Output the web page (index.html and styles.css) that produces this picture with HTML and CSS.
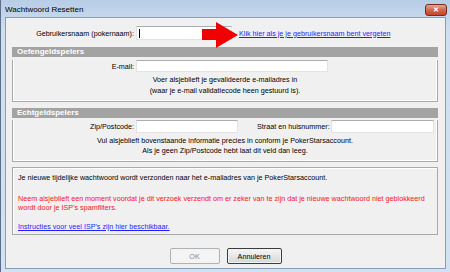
FILE: index.html
```html
<!DOCTYPE html>
<html lang="nl">
<head>
	<meta charset="UTF-8">
	<title>Wachtwoord Resetten</title>
	<link rel="stylesheet" href="styles.css">
</head>
<body>
	<div class="window">
		<div class="titlebar">
			<span class="title">Wachtwoord Resetten</span>
			<span class="close">&#x2715;</span>
		</div>

		<div class="client">
			<!-- gebruikersnaam -->
			<div class="row user-row">
				<label class="lbl lbl-user">Gebruikersnaam (pokernaam):</label>
				<div class="field field-user"><span class="caret"></span></div>
				<a class="link forgot" href="#">Klik hier als je je gebruikersnaam bent vergeten</a>
			</div>

			<!-- oefengeld -->
			<div class="group">
				<div class="group-head">Oefengeldspelers</div>
				<div class="group-body">
					<div class="row mail-row">
						<label class="lbl lbl-sub">E-mail:</label>
						<div class="field field-mail"></div>
					</div>
					<p class="note note-mail">Voer alsjeblieft je gevalideerde e-mailadres in<br>(waar je e-mail validatiecode heen gestuurd is).</p>
				</div>
			</div>

			<!-- echtgeld -->
			<div class="group group2">
				<div class="group-head">Echtgeldspelers</div>
				<div class="group-body">
					<div class="row zip-row">
						<label class="lbl lbl-sub">Zip/Postcode:</label>
						<div class="field field-zip"></div>
						<label class="lbl lbl-street">Straat en huisnummer:</label>
						<div class="field field-street"></div>
					</div>
					<p class="note note-zip">Vul alsjeblieft bovenstaande informatie precies in conform je PokerStarsaccount.<br>Als je geen Zip/Postcode hebt laat dit veld dan leeg.</p>
				</div>
			</div>

			<div class="infobox">
				<p class="info">Je nieuwe tijdelijke wachtwoord wordt verzonden naar het e-mailadres van je PokerStarsaccount.</p>
				<p class="info warn">Neem alsjeblieft een moment voordat je dit verzoek verzendt om er zeker van te zijn dat je nieuwe wachtwoord niet geblokkeerd<br>wordt door je ISP's spamfilters.</p>
				<p class="info"><a class="link" href="#">Instructies voor veel ISP's zijn hier beschikbaar.</a></p>
			</div>

			<div class="buttons">
				<button class="btn btn-ok" disabled>OK</button>
				<button class="btn btn-cancel">Annuleren</button>
			</div>
		</div>

		<!-- rode pijl over het scherm heen -->
		<svg class="arrow" width="36" height="26" viewBox="0 0 36 26">
			<polygon points="0,7 14,7 14,0 36,13 14,26 14,18 0,18" fill="#f00000"/>
		</svg>
	</div>
</body>
</html>
```

FILE: styles.css
```css
* {
	box-sizing: border-box;
}

body {
	margin: 0;
	font-family: "Liberation Sans", Arial, sans-serif;
	font-size: 7.2px;
	color: #000;
}

.window {
	position: relative;
	width: 450px;
	height: 272px;
	display: flex;
	flex-direction: column;
	padding: 0 4px 3px 4px;
	background: linear-gradient(#b7cde6, #cfdff1 30px, #d3e2f2);
	border-left: 1px solid #5d6f86;
}

.titlebar {
	height: 17px;
	display: flex;
	align-items: center;
}
.title {
	font-size: 8px;
	padding-left: 0;
	margin-top: 2px;
}
.close {
	margin-left: auto;
	margin-right: -1px;
	margin-top: 2px;
	width: 22px;
	height: 12px;
	border: 1px solid #7a2a1c;
	border-radius: 3px;
	background: linear-gradient(#e5a596, #d0664f 50%, #c44327);
	color: #fff;
	font-size: 7px;
	font-weight: bold;
	line-height: 10px;
	text-align: center;
}

.client {
	flex: 1;
	display: flex;
	flex-direction: column;
	background: #f0f0f0;
	border: 1px solid #8b9db4;
}

.row {
	display: flex;
	align-items: center;
}
.lbl {
	text-align: right;
	white-space: nowrap;
	margin-right: 2px;
}

.user-row {
	margin-top: 8px;
	height: 14px;
}
.lbl-user {
	width: 128px;
}
.field {
	background: #fff;
	border: 1px solid #e2e3ea;
	border-top-color: #abadb3;
}
.field-user {
	width: 96px;
	height: 14px;
	padding: 2px 0 0 2px;
}
.caret {
	display: block;
	width: 1px;
	height: 9px;
	background: #000;
}
.link {
	color: #1f1fff;
	text-decoration: underline;
}
.forgot {
	margin-left: 7px;
	white-space: nowrap;
}

.group {
	margin: 7px 7px 0 6px;
}
.group2 {
	margin-top: 6px;
}
.group-head {
	height: 10px;
	line-height: 10px;
	padding-left: 5px;
	background: #a3a3a3;
	color: #fff;
	font-weight: bold;
	font-size: 8px;
}
.group-body {
	height: 42px;
	border: 1px solid #a9a9a9;
	border-top: none;
	box-shadow: inset 1px 0 0 #fff, inset -1px -1px 0 #fff;
}
.lbl-sub {
	width: 121px;
}
.mail-row {
	margin-top: 3px;
}
.field-mail {
	width: 192px;
	height: 12px;
}
.note {
	margin: 0;
	text-align: center;
}
.note-mail {
	margin-top: 2px;
	line-height: 11px;
}

.zip-row {
	margin-top: 2px;
}
.field-zip {
	width: 102px;
	height: 13px;
}
.lbl-street {
	margin-left: 19px;
	margin-right: 1px;
}
.field-street {
	width: 103px;
	height: 13px;
}
.note-zip {
	margin-top: 3px;
	line-height: 9.5px;
}

.infobox {
	margin: 5px 7px 0 6px;
	height: 68px;
	border: 1px solid #a9a9a9;
	box-shadow: inset 1px 1px 0 #fff;
	padding: 5px 5px 0 5px;
}
.info {
	margin: 0;
	line-height: 9.5px;
	white-space: nowrap;
}
.warn {
	color: #f01818;
	margin-top: 11px;
}
.warn + .info {
	margin-top: 9px;
}

.buttons {
	margin-top: 13px;
	display: flex;
	justify-content: center;
	gap: 7px;
}
.btn {
	height: 16px;
	padding: 0;
	font-family: "Liberation Sans", Arial, sans-serif;
	font-size: 7.2px;
	border-radius: 2px;
}
.btn-ok {
	width: 50px;
	border: 1px solid #adb2b5;
	background: #f4f4f4;
	color: #8a8a8a;
}
.btn-cancel {
	width: 55px;
	border: 1px solid #3c3c3c;
	background: linear-gradient(#f6f6f6, #e6e6e6 50%, #d6d6d6);
	color: #000;
	box-shadow: inset 0 0 0 1px #e9f4fb;
}

.arrow {
	position: absolute;
	left: 201px;
	top: 22px;
}
```
